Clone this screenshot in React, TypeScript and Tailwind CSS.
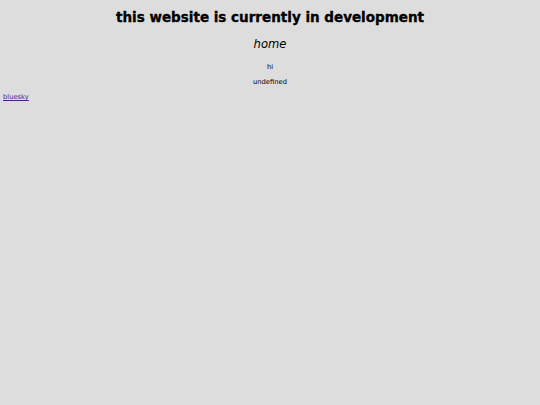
export default function App() {
  return (
    <div className="min-h-[405px] w-full bg-[#dddddd] text-black" style={{ fontFamily: '"DejaVu Sans", sans-serif' }}>
      <div className="flex flex-col pt-[9px]">
        <h1 className="text-center text-[13.5px] leading-[16px] font-black [-webkit-text-stroke:0.35px_black]">this website is currently in development</h1>
        <h2 className="mt-[12px] text-center text-[11.6px] leading-[14px] italic font-normal">home</h2>
        <p className="mt-[12px] text-center text-[6.75px] leading-[8px]">hi</p>
        <p className="mt-[7px] text-center text-[6.75px] leading-[8px]">undefined</p>
        <div className="mt-[7px] pl-[3px] text-[6.75px] leading-[8px]">
          <a href="#" className="text-[#551a8b] underline">bluesky</a>
        </div>
      </div>
    </div>
  );
}
